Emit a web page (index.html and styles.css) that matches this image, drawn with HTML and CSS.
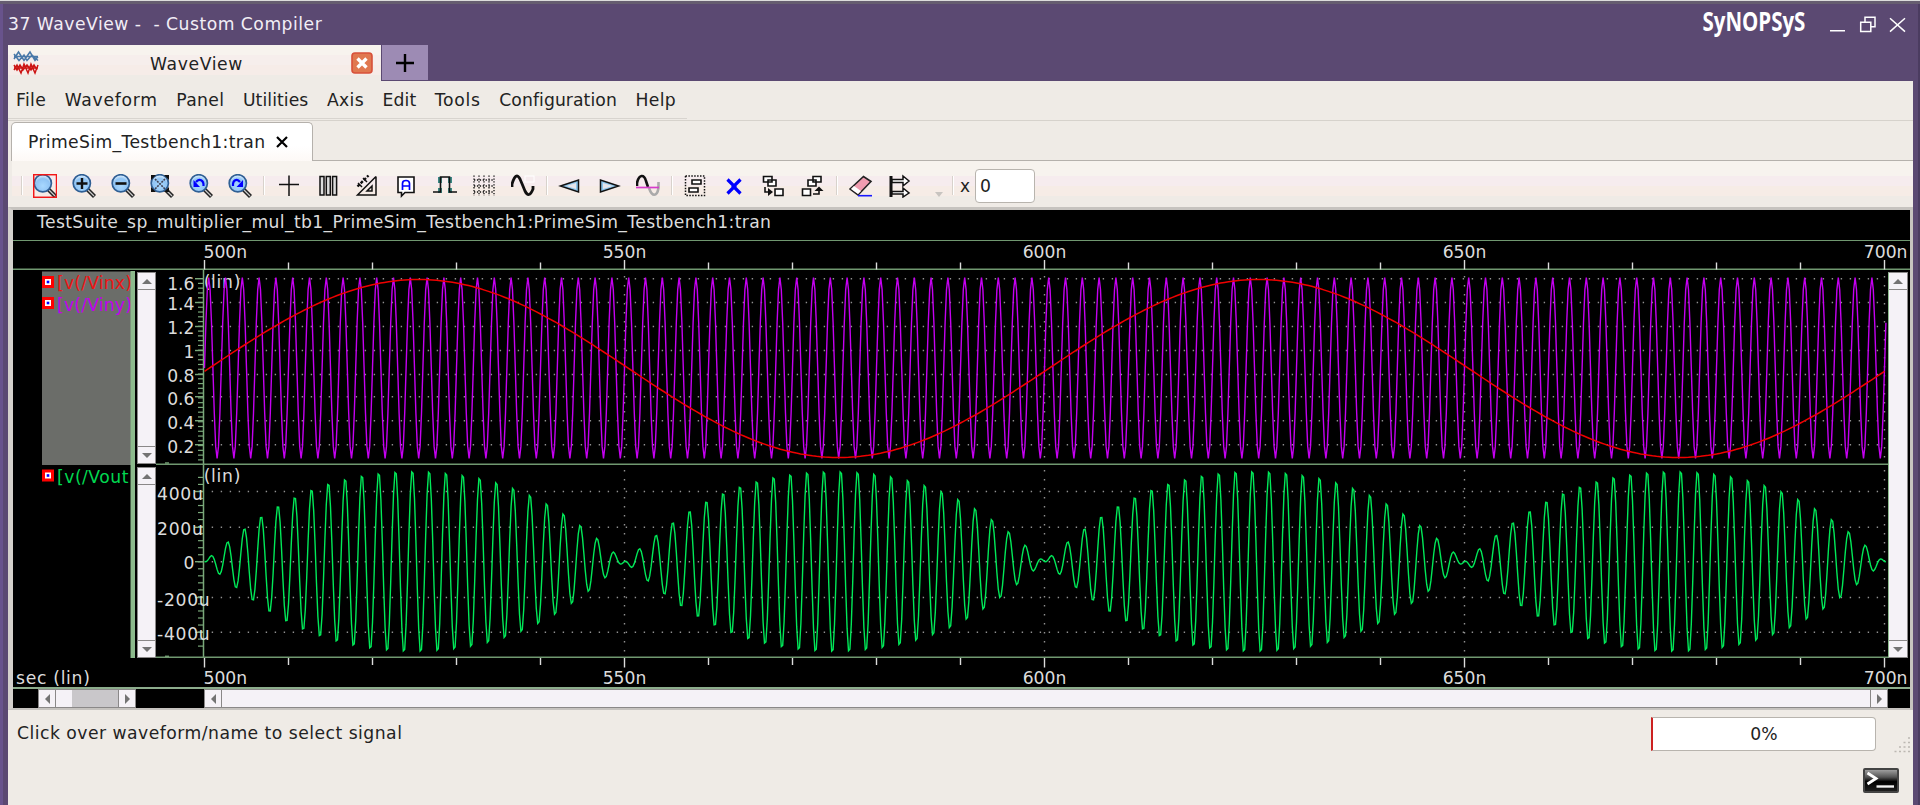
FILE: index.html
```html
<!DOCTYPE html>
<html lang="en">
<head>
<meta charset="utf-8">
<title>37 WaveView - Custom Compiler</title>
<link rel="stylesheet" href="styles.css">
</head>
<body>
<div class="window">
  <header class="titlebar">
    <span class="title">37 WaveView -&nbsp; - Custom Compiler</span>
    <svg class="brand" width="120" height="36"><text class="brand-text" transform="scale(.62 1)" x="4" y="24" textLength="166" lengthAdjust="spacingAndGlyphs">SyNOPSyS</text></svg>
    <svg class="winbtns" width="80" height="24" fill="none" stroke="#fff" stroke-width="1.5">
      <path d="M2 20.7H17M32.7 12.2H42.8V21.6H32.7ZM37 12V7.2H47V16.7H43M62 8.3L77 21.6M77 8.3L62 21.6"/>
    </svg>
  </header>
  <div class="apptabs">
    <div class="apptab">
      <svg class="wave-logo" width="26" height="25" fill="none" stroke-width="1.5">
        <path stroke="#4878a8" d="M1 6.500H25M1 9L5.500 2L11 10.500L17 2L22 10.500L25 6.500M1 4L6 10.500L11 5L14 10.500L19 5L25 10.500"/>
        <path stroke="#cc1414" d="M1 18H25M1 20L4 15L8 23L11 14L15 23L18 14L22 23L25 15M1 15L4 20L7 15L10 20L14 15L18 20L21 15L24 20"/>
      </svg>
      <span class="apptab-name">WaveView</span>
      <svg class="apptab-close" width="22" height="22"><rect x="1" y="1" width="20" height="20" rx="3" fill="#e07850" stroke="#d8503a" stroke-width="1.6"/><path d="M6.5 6.5L15.5 15.5M15.5 6.5L6.5 15.5" stroke="#fff" stroke-width="3.4"/></svg>
    </div>
    <div class="newtab"><svg width="20" height="20"><path d="M1 10H19M10 1V19" stroke="#000" stroke-width="2.4"/></svg></div>
  </div>
  <nav class="menu">
    <span>File</span><span class="wide">Waveform</span><span>Panel</span><span class="tight">Utilities</span><span>Axis</span><span class="tight">Edit</span><span class="wide">Tools</span><span class="tight">Configuration</span><span>Help</span>
  </nav>
  <div class="doctabs">
    <div class="doctab"><span>PrimeSim_Testbench1:tran</span><svg width="12" height="12"><path d="M1 1L11 11M11 1L1 11" stroke="#000" stroke-width="2.2"/></svg></div>
    <div class="doctabs-rest"></div>
  </div>
  <div class="toolbar">
    <svg width="0" height="0" class="defs"><defs>
      <radialGradient id="lens" cx=".5" cy=".65" r=".6"><stop offset="0" stop-color="#a8d8ff"/><stop offset=".7" stop-color="#90c4f4"/><stop offset="1" stop-color="#d8ecfc"/></radialGradient>
      <g id="mag"><path d="M15.5 15.5L22.5 22.5" stroke="#222" stroke-width="4.2"/><path d="M16 16L22 22" stroke="#ccc" stroke-width="1.3"/><circle cx="9.8" cy="9.3" r="8.6" fill="url(#lens)" stroke="#2f5f94" stroke-width="1.7"/></g>
    </defs></svg>
    <i class="sep"></i>
    <div class="tools">
      <svg class="ic"><use href="#mag"/><rect x=".7" y=".7" width="22.8" height="22.6" fill="none" stroke="#f21818" stroke-width="1.5"/></svg>
      <svg class="ic"><use href="#mag"/><path d="M4.5 9.5H15.5M10 4V15" stroke="#111" stroke-width="2.4"/></svg>
      <svg class="ic"><use href="#mag"/><path d="M4.5 9.5H15.5" stroke="#111" stroke-width="2.6"/></svg>
      <svg class="ic"><use href="#mag"/><path d="M5 5L15 15M15 5L5 15" stroke="#445" stroke-width="1.6" stroke-dasharray="2 1"/><path d="M1 6V1H6ZM14 1H19V6ZM1 13V18H6ZM19 13V18H14Z" fill="#111"/></svg>
      <svg class="ic"><use href="#mag"/><path d="M7 8C10 4 15 6 14.5 12" fill="none" stroke="#00f" stroke-width="2.2"/><path d="M4.5 6V13H11Z" fill="#00f"/></svg>
      <svg class="ic"><use href="#mag"/><path d="M12 8C9 4 4.500 6 5 12" fill="none" stroke="#00f" stroke-width="2.2"/><path d="M15 6V13H8.500Z" fill="#00f"/></svg>
    </div>
    <i class="sep wide"></i>
    <div class="tools">
      <svg class="ic"><path d="M2 10.500H22M12 1.500V22" stroke="#111" stroke-width="1.5"/></svg>
      <svg class="ic"><path d="M4 2.500H8V21H4ZM10.300 2.500H14.300V21H10.300ZM16.600 2.500H20.600V21H16.600Z" fill="#ddd" stroke="#111" stroke-width="1.5"/></svg>
      <svg class="ic" fill="none" stroke="#111" stroke-width="1.5"><path d="M21 2.500V21H2.500L21 2.500M17 12V17H12Z"/><path d="M2.500 12.500L13.500 1.500" stroke-dasharray="3 1.5" stroke-width="2.400"/><path d="M3 9L7 13M8 4L12 8"/></svg>
      <svg class="ic"><path d="M4 3H20V18.500H11L7.500 22V18.500H4Z" fill="#fff" stroke="#111" stroke-width="1.6"/><path d="M8.500 16V9.500Q8.500 6.500 12 6.500T15.500 9.500V16M8.500 12H15.500" fill="none" stroke="#00f" stroke-width="1.700"/></svg>
      <svg class="ic"><path d="M7 3V9M7 14V19M17 3V9M17 14V19" stroke="#3a8884" stroke-width="4"/><path d="M0 18H7.500V3H16.500V18H24" fill="none" stroke="#111" stroke-width="1.6"/></svg>
      <svg class="ic"><path d="M2 1.500V22M7 1.500V22M12 1.500V22M17 1.500V22M22 1.500V22M2 6H22M2 12H22M2 18H22" stroke="#111" stroke-width="1.300" stroke-dasharray="1.3 1.6"/></svg>
      <svg class="ic"><rect x="14" y="2" width="9" height="6" fill="none" stroke="#fff"/><path d="M1 13V10Q5 -3 9 5Q12 12 14 17Q18 25 22 15V12" fill="none" stroke="#111" stroke-width="2.800"/></svg>
    </div>
    <i class="sep"></i>
    <div class="tools">
      <svg class="ic"><path d="M2.500 12L20.500 6V18Z" fill="#8cc4ea" stroke="#111" stroke-width="1.5"/><path d="M8 12L18 9V15Z" fill="#e4e4ea"/></svg>
      <svg class="ic"><path d="M21.500 12L3.500 6V18Z" fill="#8cc4ea" stroke="#111" stroke-width="1.5"/><path d="M16 12L6 9V15Z" fill="#e4e4ea"/></svg>
      <svg class="ic" fill="none"><path d="M1 12V9C3 0 8 0 10 7L12 13" stroke="#111" stroke-width="2.600"/><path d="M13 14C16 23 21 23 22.500 14V8" stroke="#aaa" stroke-width="2.600"/><path d="M0 13.500H23" stroke="#d63ccc" stroke-width="1.700"/></svg>
    </div>
    <i class="sep"></i>
    <div class="tools">
      <svg class="ic" fill="none"><rect x="2.500" y="2" width="19" height="19.500" stroke="#111" stroke-width="1.5" stroke-dasharray="1.5 1.4"/><path d="M9 6H18V10H9ZM6 14H15V18H6Z" fill="#fff" stroke="#111" stroke-width="1.6"/></svg>
      <svg class="ic"><path d="M5.500 5.500L11 11V14L5.500 19.500M18.500 5.500L13 11V14L18.500 19.500M10 12.500H14" stroke="#00f" stroke-width="3.200" fill="none"/></svg>
      <svg class="ic" fill="#fff" stroke="#111" stroke-width="1.600"><path d="M2.500 2.500H11V8H2.500ZM7 6H15V12H7ZM14 15H22V21.500H14Z"/><path fill="none" d="M4 13V18H9"/><path fill="#111" stroke="none" d="M7 14L12 18L7 22Z"/></svg>
      <svg class="ic" fill="#fff" stroke="#111" stroke-width="1.600"><path d="M13 2.500H21V8H13ZM8 6H16V12H8ZM2.500 15H10.500V21.500H2.500Z"/><path fill="none" d="M13 20H19V16"/><path fill="#111" stroke="none" d="M14.500 17L19 12.500L23.500 17Z"/></svg>
    </div>
    <i class="sep pre-erase"></i>
    <div class="tools">
      <svg class="ic"><path d="M1 15L14.500 2.500L22 7.500L9 21Z" fill="#f09cb0" stroke="#222" stroke-width="1.600"/><path d="M2 15L5 12L12 17L9 20Z" fill="#fff"/><path d="M9 21.700H23" stroke="#1818ff" stroke-width="1.600"/></svg>
      <svg class="ic"><path d="M3 2V23" stroke="#111" stroke-width="3"/><path d="M4 5.500H15V2L21 7L15 12V8.500H4ZM4 17.500H15V14L21 19L15 23V20H4Z" fill="#fff" stroke="#111" stroke-width="1.500"/></svg>
      <svg class="ic"><path d="M8 18H16L12 23Z" fill="#c8c4c0"/></svg>
    </div>
    <i class="sep last"></i>
    <label class="xlabel">x</label><div class="xinput">0</div>
  </div>

  <main class="viewer">
    <div class="suite">TestSuite_sp_multiplier_mul_tb1_PrimeSim_Testbench1:PrimeSim_Testbench1:tran</div>
    <svg class="axis" id="axisTop" width="1897" height="29" viewBox="13 241 1897 29"></svg>
    <div class="panel p1">
      <svg class="names" width="124" height="195" viewBox="13 270 124 195">
        <rect x="42" y="271.500" width="89" height="193.500" fill="#6b6d69"/>
        <g id="marks1"></g>
        <text class="red" x="57" y="289">[v(/Vinx)</text>
        <text class="violet" x="57" y="310.500">[v(/Viny)</text>
        <rect x="130.500" y="271" width="4.500" height="194" fill="#8cba8c"/>
      </svg>
      <div class="vscroll"><b class="up"></b><i></i><b class="down"></b></div>
      <svg class="plot" id="plot1" width="1732" height="195" viewBox="156 270 1732 195"></svg>
      <div class="vscroll tall"><b class="up"></b><i></i></div>
    </div>
    <div class="panel p2">
      <svg class="names" width="124" height="193" viewBox="13 465 124 193">
        <g id="marks2"></g>
        <text class="green" x="57" y="483">[v(/Vout</text>
        <rect x="130.500" y="465" width="4.500" height="193" fill="#8cba8c"/>
      </svg>
      <div class="vscroll"><b class="up"></b><i></i><b class="down"></b></div>
      <svg class="plot" id="plot2" width="1732" height="193" viewBox="156 465 1732 193"></svg>
      <div class="vscroll tall"><i></i><b class="down"></b></div>
    </div>
    <svg class="axis" id="axisBottom" width="1897" height="29" viewBox="13 658 1897 29"></svg>
    <div class="hscrolls">
      <div class="hscroll short"><b class="left"></b><i></i><u></u><b class="right"></b></div>
      <div class="hscroll long"><b class="left"></b><i></i><b class="right"></b></div>
    </div>
  </main>

  <footer class="status">
    <span class="hint">Click over waveform/name to select signal</span>
    <div class="progress">0%</div>
    <svg class="grip" width="16" height="17"><path d="M14 2h2M9.500 6.500h2M14 6.500h2M5 11h2M9.500 11h2M14 11h2M.5 15.500h2M5 15.500h2M9.500 15.500h2M14 15.500h2" stroke="#bcb8b2" stroke-width="1.600"/></svg>
  </footer>
  <div class="console">
    <svg width="36" height="25">
      <defs><linearGradient id="term" x2="0" y2="1"><stop offset="0" stop-color="#a8a8a8"/><stop offset=".35" stop-color="#555"/><stop offset=".55" stop-color="#000"/><stop offset="1" stop-color="#222"/></linearGradient></defs>
      <rect x="1" y="1" width="34" height="23" rx="1" fill="url(#term)" stroke="#444" stroke-width="2"/>
      <path d="M4.500 5L13 10.500L4.500 16" fill="none" stroke="#fff" stroke-width="2.800"/><path d="M13.500 18.500H31" stroke="#f4f4f4" stroke-width="2.400"/>
    </svg>
  </div>
</div>
<script src="plots.js"></script>
</body>
</html>
```
FILE: styles.css
```css
* { box-sizing: border-box; }
body { margin: 0; font: 17.2px "DejaVu Sans", sans-serif; color: #222; background: #5b4972; overflow: hidden; }
svg { display: block; flex: none; }
.window { width: 1920px; height: 805px; background: #5b4972; border-top: 1px solid #dcdcdc; padding: 0 7px 0 8px; box-shadow: inset 0 3px #665d70, inset 3px 0 #68538c, inset -2px 0 #4b3c60; display: flex; flex-direction: column; }
.titlebar { height: 44px; display: flex; align-items: flex-start; flex: none; }
.title { color: #f2eef6; margin-top: 13px; line-height: 20px; flex: 1; letter-spacing: .5px; }
.brand { margin: 6px 8px 0 0; overflow: visible; }
.brand-text { font: bold 26px "Open Sans", sans-serif; fill: #fff; }
.winbtns { margin: 9px 5px 0 0; }
.apptabs { display: flex; height: 36px; flex: none; }
.apptab { width: 373px; display: flex; align-items: center; padding: 0 8px 0 5px; background: linear-gradient(#f7f3ee 0 10px, #f6eeec 10px 20px, #f6ece8 20px 30px, #efebe6 30px); }
.wave-logo { margin-bottom: 1px; }
.apptab-name { flex: 1; text-align: center; letter-spacing: .6px; padding: 2px 0 0 3px; }
.newtab { width: 46px; height: 35px; margin-left: 1px; background: #9d8bb4; display: grid; place-items: center; }
.menu { height: 39px; flex: none; display: flex; gap: 18.6px; padding: 9px 0 0 8px; line-height: 20px; letter-spacing: .35px; background: linear-gradient(#d8d4cf, #d8d4cf) 0 37px / 679px 1px no-repeat, #efebe6; }
.menu .wide { letter-spacing: .7px; }
.menu .tight { letter-spacing: .08px; }
.doctabs { height: 41px; flex: none; display: flex; align-items: stretch; background: #efebe6; border-top: 1px solid #d6d2cc; padding: 1px 0 0 3px; }
.doctab { width: 302px; border: 1.5px solid #b5b1ac; border-bottom: 0; border-radius: 5px 5px 0 0; background: linear-gradient(#fff 60%, #fdf9f6); display: flex; align-items: center; gap: 11px; padding: 0 0 1px 16px; letter-spacing: .36px; }
.doctabs-rest { flex: 1; border-bottom: 1.500px solid #b5b1ac; }
.toolbar { height: 46px; flex: none; display: flex; align-items: center; padding: 3px 0 0 13px; border-left: 4px solid #efebe6; background: linear-gradient(#f7f3ee 0 15px, #f6ecee 15px 25px, #f6ece6 25px 35px, #efebe6 35px); }
.defs { position: absolute; }
.tools { display: flex; gap: 15px; }
.ic { width: 24px; height: 24px; }
.sep { width: 2px; height: 19px; background: linear-gradient(90deg, #d8d2cc 50%, #fff 50%); margin: 0 10.500px; }
.sep:first-of-type { margin: 0 10px 0 -4px; }
.sep.wide { margin: 0 12px 0 11px; }
.sep.pre-erase { margin: 0 11.500px; }
.sep.last { margin: 0 6px 0 1px; }
.xlabel { font-size: 17px; width: 15px; }
.xinput { width: 60px; height: 34px; border: 1.500px solid #b8b4ae; border-radius: 4px; background: #fff; padding: 5px 4px; line-height: 22px; }
.viewer { height: 503px; flex: none; width: 1905px; background: #000; border: solid #c6c3bf; border-width: 3px 3px 2px 5px; border-left-color: #d4d0cc; display: flex; flex-direction: column; color: #dcdcdc; }
.suite { height: 31px; padding: 2px 0 0 24px; line-height: 20px; border-bottom: 1.500px solid #709870; letter-spacing: .375px; }
.viewer text { font: 17.2px "DejaVu Sans", sans-serif; fill: #dcdcdc; }
.viewer .names text { letter-spacing: .2px; }
.viewer .names text.green { letter-spacing: .5px; }
.viewer text.spaced { letter-spacing: .7px; }
.viewer text.red { fill: #f01414; } .viewer text.violet { fill: #c400f0; } .viewer text.green { fill: #00d850; }
.panel { display: flex; height: 195px; }
.p2 { height: 193px; }
.vscroll { width: 19px; margin-top: 2px; background: #f5f2f7; border: 1.500px solid #8a8888; display: flex; flex-direction: column; height: 192px; }
.p2 .vscroll { height: 191px; }
.vscroll i, .hscroll i { flex: 1; }
.vscroll.tall { border-left-color: #8cba8c; width: 20px; }
.p1 .vscroll.tall { height: 193px; border-bottom: 0; }
.p2 .vscroll.tall { height: 193px; margin-top: 0; border-top: 0; }
.vscroll b, .hscroll b { display: grid; place-items: center; flex: none; }
.vscroll b { height: 17px; }
.up { border-bottom: 1.500px solid #8a8888; } .down { border-top: 1.500px solid #8a8888; }
.vscroll b::after, .hscroll b::after { content: ""; border: 5px solid transparent; }
.vscroll .up::after { border-bottom-color: #737373; border-top: 0; }
.vscroll .down::after { border-top-color: #737373; border-bottom: 0; }
.hscrolls { height: 21px; display: flex; border-top: 2px solid #8cac8c; }
.hscroll { display: flex; height: 19px; background: #f5f2f7; border: 1.500px solid #8a8888; }
.hscroll b { width: 17px; }
.hscroll.short { width: 98px; margin-left: 25px; }
.hscroll.long { width: 1684px; margin-left: 68px; }
.hscroll .left { border-right: 1.500px solid #8a8888; } .hscroll .right { border-left: 1.500px solid #8a8888; }
.hscroll.short i { flex: none; width: 16px; }
.hscroll u { flex: 1; background: #c9c7ca; }
.hscroll .left::after { border-right-color: #737373; border-left: 0; }
.hscroll .right::after { border-left-color: #737373; border-right: 0; }
.status { height: 52px; flex: none; display: flex; align-items: flex-start; background: #efebe6; padding: 6px 3px 0 9px; }
.hint { flex: 1; margin-top: 7px; line-height: 20px; letter-spacing: .48px; }
.progress { width: 225px; height: 34px; margin: 1px 18px 0 0; background: #fff; border: 1.500px solid #b8b4ae; border-left: 2px solid #cc2020; border-radius: 0 4px 4px 0; text-align: center; line-height: 32px; }
.grip { margin-top: 20px; }
.console { flex: 1; background: #efebe6; display: flex; justify-content: flex-end; padding: 6px 14px 0 0; }
```
FILE: plots.js
```js
const X0 = 204.5, NS = 8.4, X1 = 1886.5;
const line = (x1, y1, x2, y2, c, w = 1.4) => `<path d="M${x1} ${y1}L${x2} ${y2}" stroke="${c}" stroke-width="${w}"/>`;
const text = (x, y, s, a = 'start', cls = '') => `<text class="${cls}" x="${x}" y="${y}" text-anchor="${a}">${s}</text>`;

// Time axes: major ticks every 50 ns, minor every 10 ns
function axis(id, base, dir, label, extra) {
  let s = extra;
  for (let i = 0; i <= 20; i++) {
    s += line(X0 + i * 84, base, X0 + i * 84, base + dir * (i % 5 ? 7 : 9.5), '#dcdcdc');
  }
  s += text(203.5, label, '500n') + text(624.5, label, '550n', 'middle') + text(1044.5, label, '600n', 'middle')
    + text(1464.5, label, '650n', 'middle') + text(1907.5, label, '700n', 'end');
  document.getElementById(id).innerHTML = s;
}
axis('axisTop', 269.5, -1, 257.6, line(13, 269.3, 1910, 269.3, '#709870', 1.5));
axis('axisBottom', 658, 1, 683.6, text(16, 683.6, 'sec (lin)', 'start', 'spaced'));

function marks(id, ys) {
  document.getElementById(id).innerHTML = ys.map(y =>
    `<rect x="42" y="${y}" width="12" height="12" fill="#f00"/><rect x="45" y="${y + 3}" width="6" height="6" fill="#fff"/><rect x="46.700" y="${y + 4.7}" width="2.600" height="2.600" fill="#00f"/>`).join('');
}
marks('marks1', [276, 297]);
marks('marks2', [469.5]);

function grid(rows, top, bottom) {
  let s = '<g stroke="#909090" stroke-width="1.4" stroke-dasharray="1.4 7.6">';
  for (const y of rows) s += `<path d="M211.700 ${y}H1884"/>`;
  for (const x of [624.5, 1044.5, 1464.5, 1884.5]) s += `<path d="M${x} ${top}V${bottom}"/>`;
  return s + '</g>';
}
function yaxis(top, bottom, majors, minorStart, minorStep) {
  const c = '#7aa87a';
  let s = line(203.5, top, 203.5, bottom, c, 1.5);
  for (const y of majors) s += line(195, y, 203.5, y, c);
  for (let y = minorStart; y < bottom - 4; y += minorStep) s += line(198, y, 203.5, y, c, 1.2);
  return s;
}
function trace(f, color, step, w) {
  let d = '';
  for (let x = X0; x <= X1; x += step) d += (d ? 'L' : 'M') + x.toFixed(1) + ' ' + f((x - X0) / NS).toFixed(1);
  return `<path d="${d}" fill="none" stroke="${color}" stroke-width="${w}"/>`;
}
const TAU = Math.PI * 2;
const vinx = t => 368.5 - 89 * Math.sin(TAU * (t - 0.5) / 100);
const viny = t => 368 - 90.5 * Math.sin(TAU * t / 2);
const vout = t => {
  const e = Math.tanh(0.9 * Math.sin(TAU * t / 100)) / Math.tanh(0.9);
  return 561.5 - 92 * e * Math.sin(TAU * (t - 0.24) / 2);
};

const rows1 = [278.7, 302.5, 326.5, 350.5, 374.5, 396.7, 420.7, 444.7];
const labels1 = ['1.6', '1.4', '1.2', '1', '0.8', '0.6', '0.4', '0.2'];
const base1 = [290.3, 310.2, 334.2, 358, 382, 405, 429, 452.5];
document.getElementById('plot1').innerHTML =
  grid(rows1, 276, 460) + text(203.7, 288.3, '(lin)', 'start', 'spaced') + yaxis(270, 464, rows1, 283.4, 4.77)
  + labels1.map((l, i) => text(194.5, base1[i], l, 'end')).join('')
  + trace(viny, '#c400f0', 1.4, 1.4) + trace(vinx, '#f00000', 4, 1.5)
  + line(165, 463, 169, 463, '#7aa87a') + line(156, 464.3, 1888, 464.3, '#709870', 1.5);

const rows2 = [491.5, 527.3, 561.7, 597.5, 632.3];
const labels2 = ['400u', '200u', '0', '-200u', '-400u'];
const base2 = [499.5, 535, 569, 605.5, 640];
document.getElementById('plot2').innerHTML =
  grid(rows2, 470, 655) + text(203.7, 482.2, '(lin)', 'start', 'spaced') + yaxis(465, 657, rows2, 477.4, 7.03)
  + labels2.map((l, i) => l === '0' ? text(194.5, base2[i], l, 'end') : text(157, base2[i], l, 'start', 'spaced')).join('')
  + trace(vout, '#00e858', 1.4, 1.4)
  + line(165, 656.3, 169, 656.3, '#7aa87a') + line(156, 657.3, 1888, 657.3, '#709870', 1.5);
```
